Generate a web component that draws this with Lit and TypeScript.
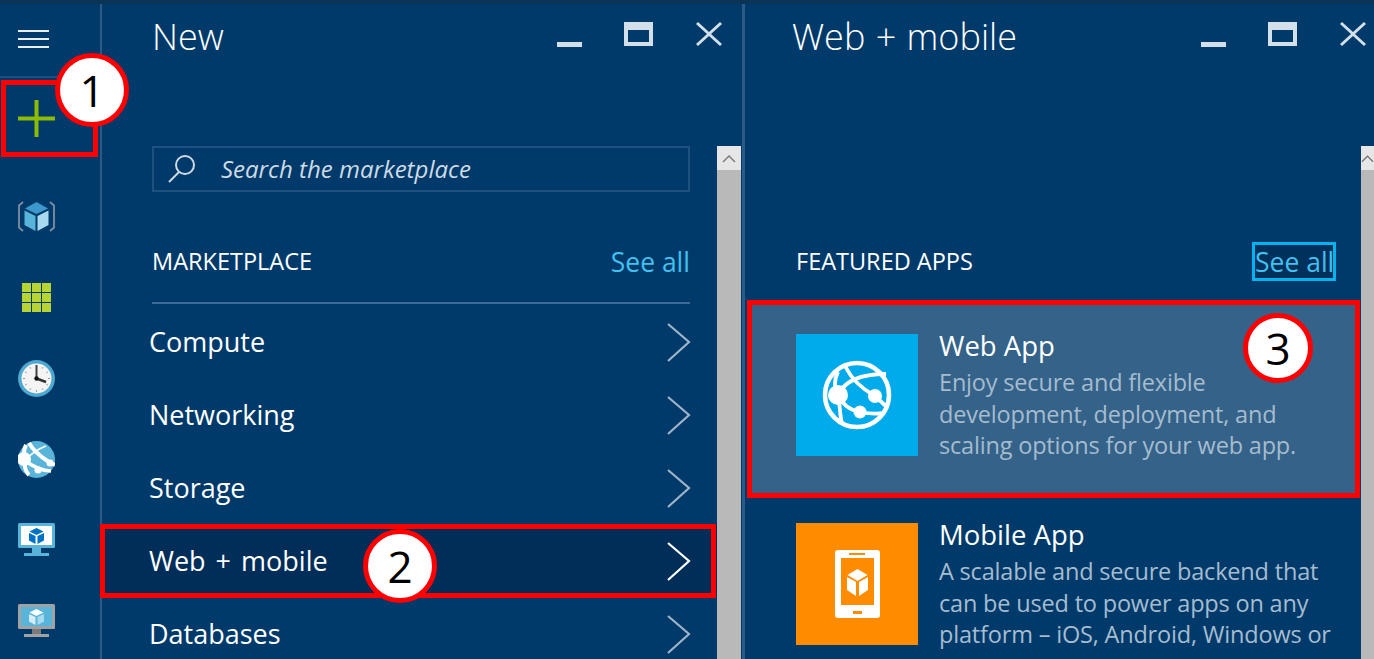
import { LitElement, html, css, svg } from "lit";
import { customElement } from "lit/decorators.js";

const globeLines = svg`
  <circle cx="61" cy="61" r="32" fill="none" stroke="#fff" stroke-width="4.6"/>
  <g fill="none" stroke="#fff" stroke-width="3.8">
    <path d="M42 61C48 48 64 40 90 40"/>
    <path d="M49 32C56 46 68 56 79 62L92 74"/>
    <path d="M42 61C46 70 54 76 64 78C74 80 80 80 88 79"/>
    <path d="M42 61C38 54 38 46 42 38"/>
    <path d="M42 61C44 72 44 82 46 90"/>
  </g>
  <circle cx="42" cy="61" r="10" fill="#fff"/>
  <circle cx="79" cy="62" r="7" fill="#fff"/>
  <circle cx="64" cy="78" r="6.5" fill="#fff"/>
`;

@customElement("app-root")
export class AppRoot extends LitElement {
  static styles = css`
    :host {
      display: block;
      width: 1374px;
      height: 659px;
      overflow: hidden;
      position: relative;
      background: #003a6b;
      color: #fff;
      font-family: "Open Sans", "Noto Sans", sans-serif;
    }
    .strip { height: 4px; background: #0c3457; }
    .page { display: flex; height: 655px; }

    /* left rail */
    .rail {
      width: 100px;
      flex: none;
      border-right: 2px solid #2a5a85;
      display: flex;
      flex-direction: column;
      align-items: flex-start;
    }
    .burger {
      width: 100%;
      height: 74px;
      border-bottom: 2px solid #1f4f7c;
      padding: 26px 0 0 18px;
      box-sizing: border-box;
      flex: none;
    }
    .burger i { display: block; width: 31px; height: 2px; background: #e8eef3; margin-bottom: 6px; }
    .rail-item { height: 81px; flex: none; display: flex; align-items: center; padding-left: 18px; }
    .rail-item svg { display: block; width: 37px; height: 37px; }
    .rail-item.add { height: 80px; margin-bottom: 18px; }

    /* blades */
    .blade { display: flex; flex-direction: column; flex: none; }
    .blade.one { width: 640px; border-right: 3px solid #2a5a85; }
    .blade.two { flex: 1; min-width: 0; }
    .head { height: 142px; flex: none; position: relative; display: flex; }
    .title { font-size: 36px; line-height: 40px; margin-top: 13px; font-weight: 300; word-spacing: 1px; }
    .one .title { margin-left: 50px; }
    .two .title { margin-left: 47px; }
    .ctrls { position: absolute; top: 0; left: 0; width: 640px; height: 60px; }
    .ctrls svg { display: block; width: 640px; height: 60px; }
    .body { flex: 1; display: flex; min-height: 0; }
    .content { flex: 1; min-width: 0; display: flex; flex-direction: column; }
    .scroll { width: 24px; flex: none; background: #b9b9b9; margin-right: 1px; }
    .two .scroll { margin-right: 0; width: 13px; }
    .scroll .up {
      height: 24px;
      background: #e6e6e6;
      display: flex;
      align-items: center;
      justify-content: center;
    }

    .search {
      margin: 0 27px 0 50px;
      height: 46px;
      box-sizing: border-box;
      border: 2px solid #1f5180;
      display: flex;
      align-items: center;
      padding-left: 12px;
      gap: 23px;
      flex: none;
    }
    .search span { font-style: italic; font-size: 24px; color: #cfdbe5; font-weight: 400; margin-top: -2px; }

    .section {
      display: flex;
      align-items: center;
      justify-content: space-between;
      flex: none;
    }
    .one .section {
      margin: 46px 27px 0 50px;
      height: 64px;
      border-bottom: 2px solid #3f6a92;
      box-sizing: content-box;
    }
    .two .section { margin: 92px 25px 0 51px; height: 64px; }
    .section h2 { margin: 0; font-weight: 400; font-size: 23.5px; padding-bottom: 18px; }
    .see { font-size: 26.5px; color: #42c0ee; padding-bottom: 16px; }
    .see.focus {
      border: 3px solid #00b4f0;
      background: #00305c;
      width: 84px;
      box-sizing: border-box;
      text-align: center;
      padding: 0;
      height: 39px;
      line-height: 35px;
      margin-bottom: 18px;
      white-space: nowrap;
    }

    .list { margin-top: 2px; }
    .row {
      height: 73px;
      display: flex;
      align-items: center;
      justify-content: space-between;
      padding: 0 25px 0 47px;
      font-size: 27px;
      word-spacing: 3px;
    }
    .row span { margin-top: -2px; }
    .row.on { background: #002e59; }
    .row svg { display: block; width: 26px; height: 40px; margin-top: -2px; }

    .tile {
      margin: 3px 6px 0 5px;
      padding: 29px 0 0 46px;
      height: 189px;
      flex: none;
      display: flex;
      gap: 21px;
      box-sizing: border-box;
    }
    .tile.on { background: #346289; }
    .tile.off { margin-top: 0; }
    .tile .pic { width: 122px; height: 122px; flex: none; }
    .tile .pic svg { display: block; width: 122px; height: 122px; }
    .tile .name { font-size: 27.5px; line-height: 32px; margin: -4px 0 5px; }
    .tile .desc { font-size: 23.5px; line-height: 31.5px; color: #a6bccf; letter-spacing: -0.18px; white-space: nowrap; }

    /* red callouts drawn over the screenshot */
    .mark { position: absolute; border: 5px solid #f00; box-sizing: border-box; }
    .m1 { left: 1px; top: 80px; width: 97px; height: 77px; }
    .m2 { left: 100px; top: 524px; width: 616px; height: 74px; }
    .m3 { left: 747px; top: 300px; width: 613px; height: 198px; }
    .num {
      position: absolute;
      width: 74px;
      height: 74px;
      box-sizing: border-box;
      border: 5px solid #f00;
      border-radius: 50%;
      background: #fff;
      color: #000;
      font-size: 44px;
      display: flex;
      align-items: center;
      justify-content: center;
    }
    .n1 { left: 55px; top: 53px; }
    .n2 { left: 363px; top: 529px; }
    .n3 { left: 1243px; top: 313px; width: 70px; height: 70px; }
  `;

  private chevron(bright: boolean) {
    return html`<svg viewBox="0 0 26 40"><path d="M2 2L23 20L2 39" fill="none"
      stroke=${bright ? "#fff" : "#9fb4c8"} stroke-width="2.2"/></svg>`;
  }

  private controls(x: number) {
    return html`<div class="ctrls"><svg viewBox="0 0 640 60">
      <g transform="translate(${x} 0)" fill="#d3dfe9">
        <rect x="0" y="38" width="25" height="5"/>
        <path fill-rule="evenodd" d="M67 18h29v24h-29zM71 26v12h21v-12z"/>
        <path d="M139 20l2-2 11 10 11-10 2 2-11 10 11 10-2 2-11-10-11 10-2-2 11-10z"/>
      </g>
    </svg></div>`;
  }

  private upArrow() {
    return html`<svg width="14" height="9" viewBox="0 0 14 9"><path d="M1 8L7 2L13 8" fill="none" stroke="#777" stroke-width="1.4"/></svg>`;
  }

  render() {
    const rows = ["Compute", "Networking", "Storage", "Web + mobile", "Databases"];
    return html`
      <div class="strip"></div>
      <div class="page">
        <nav class="rail">
          <div class="burger"><i></i><i></i><i></i></div>
          <div class="rail-item add">
            <svg viewBox="0 0 37 37"><path d="M16.500 0h4v16.500h16.500v4h-16.500v16.500h-4v-16.500h-16.500v-4h16.500z" fill="#8cbb00"/></svg>
          </div>
          <div class="rail-item">
            <svg viewBox="0 0 37 37">
              <path d="M5 4L1 7.500v22L5 33M32 4l4 3.500v22L32 33" fill="none" stroke="#7f8f9f" stroke-width="1.8"/>
              <path d="M18.500 4L30 10.500L18.500 16L7 10.500z" fill="#3d99cc"/>
              <path d="M6.500 12.500l11 5.500v15L6.500 27z" fill="#59b4d9"/>
              <path d="M30.500 12.500l-11 5.500v15l11-6z" fill="#a9d9ef"/>
            </svg>
          </div>
          <div class="rail-item">
            <svg viewBox="0 0 37 37">
              <g fill="#b8d432">
                <rect x="4" y="4" width="9" height="9"/><rect x="14" y="4" width="9" height="9"/><rect x="24" y="4" width="9" height="9"/>
                <rect x="4" y="14" width="9" height="9"/><rect x="14" y="14" width="9" height="9"/><rect x="24" y="14" width="9" height="9"/>
                <rect x="4" y="24" width="9" height="9"/><rect x="14" y="24" width="9" height="9"/><rect x="24" y="24" width="9" height="9"/>
              </g>
            </svg>
          </div>
          <div class="rail-item">
            <svg viewBox="0 0 37 37">
              <circle cx="18.500" cy="18.500" r="18.500" fill="#4fa8cf"/>
              <circle cx="18.500" cy="18.500" r="15" fill="#f4f4f4"/>
              <g stroke="#999" stroke-width="1">
                <path d="M18.500 5v2M18.500 30v2M5 18.500h2M30 18.500h2M11.800 7l1 1.700M25.200 7l-1 1.700M7 11.800l1.700 1M30 11.800l-1.700 1M7 25.200l1.700-1M30 25.200l-1.700-1M11.800 30l1-1.700M25.200 30l-1-1.700"/>
              </g>
              <path d="M18.500 18.500V5" stroke="#444" stroke-width="2"/>
              <path d="M18.500 18.500L28 22" stroke="#333" stroke-width="2.600"/>
              <circle cx="18.500" cy="18.500" r="2.200" fill="#111"/>
            </svg>
          </div>
          <div class="rail-item">
            <svg viewBox="0 0 37 37">
              <circle cx="18.500" cy="18.500" r="18.500" fill="#59b4d9"/>
              <g fill="none" stroke="#fff">
                <path d="M11 2C15 9 23 16 31 21L37 24" stroke-width="4"/>
                <path d="M6 19C14 25 22 30 33 30" stroke-width="3.600"/>
                <path d="M7 19C14 12 20 8 28 5" stroke-width="1.600"/>
                <path d="M7 17C5 11 6 8 8 4M7 19C6 26 8 31 11 34" stroke-width="4"/>
              </g>
              <circle cx="6" cy="18" r="7" fill="#fff"/>
              <circle cx="32" cy="22" r="3.500" fill="#fff"/>
              <circle cx="20" cy="29" r="3.500" fill="#fff"/>
            </svg>
          </div>
          <div class="rail-item">
            <svg viewBox="0 0 37 37">
              <rect x="0" y="1" width="37" height="25" rx="1.500" fill="#59b4d9"/>
              <rect x="3" y="4" width="31" height="19" fill="#fff"/>
              <path d="M14 26h9v5h-9zM6 31h25v3h-25z" fill="#59b4d9"/>
              <path d="M18.500 6l7 3.500l-7 3.500l-7-3.500z" fill="#0072c6"/>
              <path d="M11 11l6.500 3v8l-6.500-3.500zM26 11l-6.500 3v8l6.500-3.500z" fill="#0072c6"/>
            </svg>
          </div>
          <div class="rail-item">
            <svg viewBox="0 0 37 37">
              <rect x="0" y="1" width="37" height="25" rx="1.500" fill="#a0a1a2"/>
              <rect x="3" y="4" width="31" height="19" fill="#59b4d9"/>
              <path d="M14 26h9v5h-9z" fill="#7a7a7a"/>
              <path d="M6 31h25v3h-25z" fill="#a0a1a2"/>
              <path d="M18.500 6l7 3.500l-7 3.500l-7-3.500z" fill="#fff"/>
              <path d="M11 11l6.500 3v8l-6.500-3.500z" fill="#d4ecf6"/>
              <path d="M26 11l-6.500 3v8l6.500-3.500z" fill="#a9d9ef"/>
            </svg>
          </div>
        </nav>

        <section class="blade one">
          <header class="head">
            <div class="title">New</div>
            ${this.controls(455)}
          </header>
          <div class="body">
            <div class="content">
              <div class="search">
                <svg width="32" height="32" viewBox="0 0 32 32">
                  <circle cx="19" cy="12" r="9" fill="none" stroke="#cdd9e3" stroke-width="2"/>
                  <path d="M13 19L3 29" stroke="#cdd9e3" stroke-width="2"/>
                </svg>
                <span>Search the marketplace</span>
              </div>
              <div class="section">
                <h2>MARKETPLACE</h2>
                <span class="see">See all</span>
              </div>
              <div class="list">
                ${rows.map(
                  (r) => html`<div class="row ${r === "Web + mobile" ? "on" : ""}">
                    <span>${r}</span>${this.chevron(r === "Web + mobile")}
                  </div>`
                )}
              </div>
            </div>
            <div class="scroll"><div class="up">${this.upArrow()}</div></div>
          </div>
        </section>

        <section class="blade two">
          <header class="head">
            <div class="title">Web + mobile</div>
            ${this.controls(456)}
          </header>
          <div class="body">
            <div class="content">
              <div class="section">
                <h2>FEATURED APPS</h2>
                <span class="see focus">See all</span>
              </div>
              <div class="tile on">
                <div class="pic">
                  <svg viewBox="0 0 122 122"><rect width="122" height="122" fill="#00abec"/>${globeLines}</svg>
                </div>
                <div>
                  <div class="name">Web App</div>
                  <div class="desc">Enjoy secure and flexible<br />development, deployment, and<br />scaling options for your web app.</div>
                </div>
              </div>
              <div class="tile off">
                <div class="pic">
                  <svg viewBox="0 0 122 122">
                    <rect width="122" height="122" fill="#ff8c00"/>
                    <path fill-rule="evenodd" fill="#fff" d="M42 27h39a3 3 0 0 1 3 3v62a3 3 0 0 1-3 3h-39a3 3 0 0 1-3-3v-62a3 3 0 0 1 3-3zM45 35v47h33v-47z"/>
                    <path d="M53 30h16v2h-16zM57 88h9v3h-9z" fill="#ff8c00"/>
                    <path d="M61.500 46l10 6-10 6-10-6z" fill="#fff"/>
                    <path d="M51 54l9 5v14l-9-6zM72 54l-9 5v14l9-6z" fill="#fff"/>
                  </svg>
                </div>
                <div>
                  <div class="name">Mobile App</div>
                  <div class="desc">A scalable and secure backend that<br />can be used to power apps on any<br />platform – iOS, Android, Windows or</div>
                </div>
              </div>
            </div>
            <div class="scroll"><div class="up">${this.upArrow()}</div></div>
          </div>
        </section>
      </div>

      <div class="mark m1"></div>
      <div class="mark m2"></div>
      <div class="mark m3"></div>
      <div class="num n1">1</div>
      <div class="num n2">2</div>
      <div class="num n3">3</div>
    `;
  }
}
